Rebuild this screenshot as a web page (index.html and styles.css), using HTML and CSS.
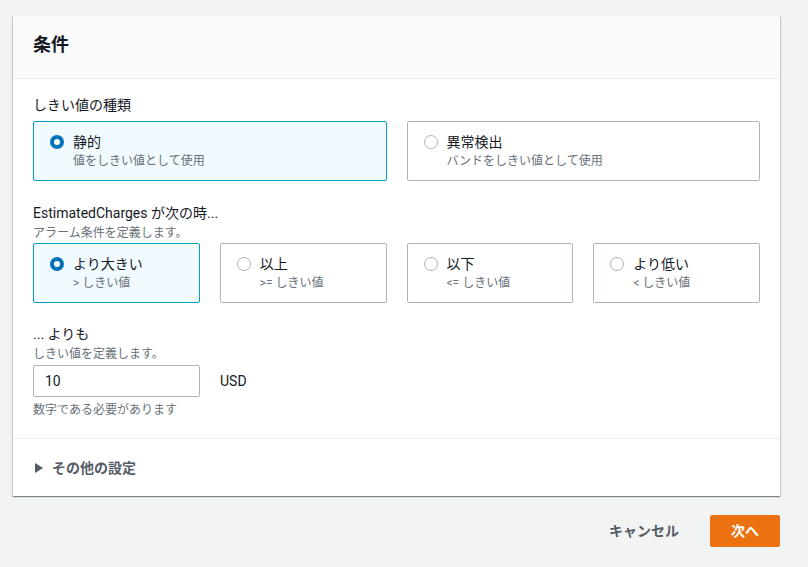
FILE: index.html
```html
<!DOCTYPE html>
<html lang="ja">
  <head>
    <meta charset="UTF-8" />
    <meta name="viewport" content="width=device-width, initial-scale=1.0" />
    <title>条件</title>
    <link rel="stylesheet" href="styles.css">
  </head>
  <body>
    <main class="page">
      <section class="panel">
        <header class="panel__header">
          <h2>条件</h2>
        </header>
        <div class="panel__body">
          <div class="field">
            <p class="field__label">しきい値の種類</p>
            <div class="tiles tiles--2">
              <label class="tile tile--checked">
                <span class="radio radio--checked"></span>
                <span class="tile__text">
                  <span class="tile__title">静的</span>
                  <span class="tile__desc">値をしきい値として使用</span>
                </span>
              </label>
              <label class="tile">
                <span class="radio"></span>
                <span class="tile__text">
                  <span class="tile__title">異常検出</span>
                  <span class="tile__desc">バンドをしきい値として使用</span>
                </span>
              </label>
            </div>
          </div>

          <div class="field">
            <p class="field__label">EstimatedCharges が次の時...</p>
            <p class="field__desc">アラーム条件を定義します。</p>
            <div class="tiles tiles--4">
              <label class="tile tile--checked">
                <span class="radio radio--checked"></span>
                <span class="tile__text">
                  <span class="tile__title">より大きい</span>
                  <span class="tile__desc">&gt; しきい値</span>
                </span>
              </label>
              <label class="tile">
                <span class="radio"></span>
                <span class="tile__text">
                  <span class="tile__title">以上</span>
                  <span class="tile__desc">&gt;= しきい値</span>
                </span>
              </label>
              <label class="tile">
                <span class="radio"></span>
                <span class="tile__text">
                  <span class="tile__title">以下</span>
                  <span class="tile__desc">&lt;= しきい値</span>
                </span>
              </label>
              <label class="tile">
                <span class="radio"></span>
                <span class="tile__text">
                  <span class="tile__title">より低い</span>
                  <span class="tile__desc">&lt; しきい値</span>
                </span>
              </label>
            </div>
          </div>

          <div class="field field--amount">
            <p class="field__label">... よりも</p>
            <p class="field__desc">しきい値を定義します。</p>
            <div class="amount">
              <input class="amount__input" type="text" value="10" />
              <span class="amount__unit">USD</span>
            </div>
            <p class="field__hint">数字である必要があります</p>
          </div>
        </div>
        <div class="panel__footer">
          <span class="caret"></span>
          <span>その他の設定</span>
        </div>
      </section>

      <div class="actions">
        <button class="btn btn--link">キャンセル</button>
        <button class="btn btn--primary">次へ</button>
      </div>
    </main>
  </body>
</html>
```

FILE: styles.css
```css
* {
  margin: 0;
  padding: 0;
  box-sizing: border-box;
}

body {
  background-color: #f2f3f3;
  color: #16191f;
  font-family: Roboto, "Noto Sans CJK JP", sans-serif;
  font-size: 14px;
  line-height: 22px;
}

.page {
  padding: 16px 28px 0 13px;
}

/* panel */
.panel {
  background-color: #fff;
  box-shadow: 0 1px 1px 0 rgba(0, 28, 36, 0.3),
    1px 1px 1px 0 rgba(0, 28, 36, 0.15),
    -1px 1px 1px 0 rgba(0, 28, 36, 0.15);
}
.panel__header {
  background-color: #fafafa;
  border-bottom: 1px solid #eaeded;
  height: 63px;
  padding: 0 20px;
  display: flex;
  align-items: center;
}
.panel__header h2 {
  font-size: 18px;
  font-weight: 700;
  line-height: 24px;
  margin-top: -4px;
}
.panel__body {
  padding: 15px 20px 19px;
  border-bottom: 1px solid #eaeded;
}
.panel__footer {
  height: 57px;
  padding: 0 22px;
  display: flex;
  align-items: center;
  gap: 9px;
  color: #545b64;
  font-weight: 700;
}
.caret {
  width: 0;
  height: 0;
  border-top: 5px solid transparent;
  border-bottom: 5px solid transparent;
  border-left: 8px solid #545b64;
}

/* fields */
.field + .field {
  margin-top: 21px;
}
.field + .field--amount {
  margin-top: 20px;
}
.field__label {
  line-height: 22px;
}
.field__desc,
.field__hint {
  color: #687078;
  font-size: 12px;
  line-height: 18px;
}
.field__hint {
  margin-top: 4px;
}
.field__label + .tiles {
  margin-top: 5px;
}
.field__desc + .tiles {
  margin-top: 1px;
}
.field__desc + .amount {
  margin-top: 2px;
}

/* tiles */
.tiles {
  display: grid;
  gap: 20px;
}
.tiles--2 {
  grid-template-columns: 1fr 1fr;
}
.tiles--4 {
  grid-template-columns: repeat(4, 1fr);
}
.tile {
  display: flex;
  align-items: flex-start;
  gap: 9px;
  height: 60px;
  padding: 9px 16px;
  border: 1px solid #aab7b8;
  border-radius: 2px;
  cursor: pointer;
}
.tile--checked {
  border-color: #00a1c9;
  background-color: #f1faff;
}
.tile__text {
  display: flex;
  flex-direction: column;
}
.tile__title {
  line-height: 22px;
}
.tile__desc {
  color: #687078;
  font-size: 12px;
  line-height: 16px;
}
.radio {
  flex: none;
  width: 14px;
  height: 14px;
  margin-top: 4px;
  border: 1px solid #aab7b8;
  border-radius: 50%;
  background-color: #fff;
}
.radio--checked {
  border: 4px solid #0073bb;
}

/* amount input */
.amount {
  display: flex;
  align-items: center;
  gap: 20px;
}
.amount__input {
  width: 167px;
  height: 32px;
  padding: 0 11px;
  border: 1px solid #aab7b8;
  border-radius: 2px;
  font: inherit;
  color: #16191f;
}
.amount__unit {
  font-weight: 400;
}

/* actions */
.actions {
  display: flex;
  justify-content: flex-end;
  align-items: center;
  gap: 10px;
  margin-top: 19px;
}
.btn {
  font: inherit;
  font-weight: 700;
  border: 1px solid transparent;
  border-radius: 2px;
  height: 32px;
  padding: 0 20px;
  cursor: pointer;
}
.btn--link {
  background: none;
  color: #545b64;
}
.btn--primary {
  background-color: #ec7211;
  border-color: #ec7211;
  color: #fff;
}
```
